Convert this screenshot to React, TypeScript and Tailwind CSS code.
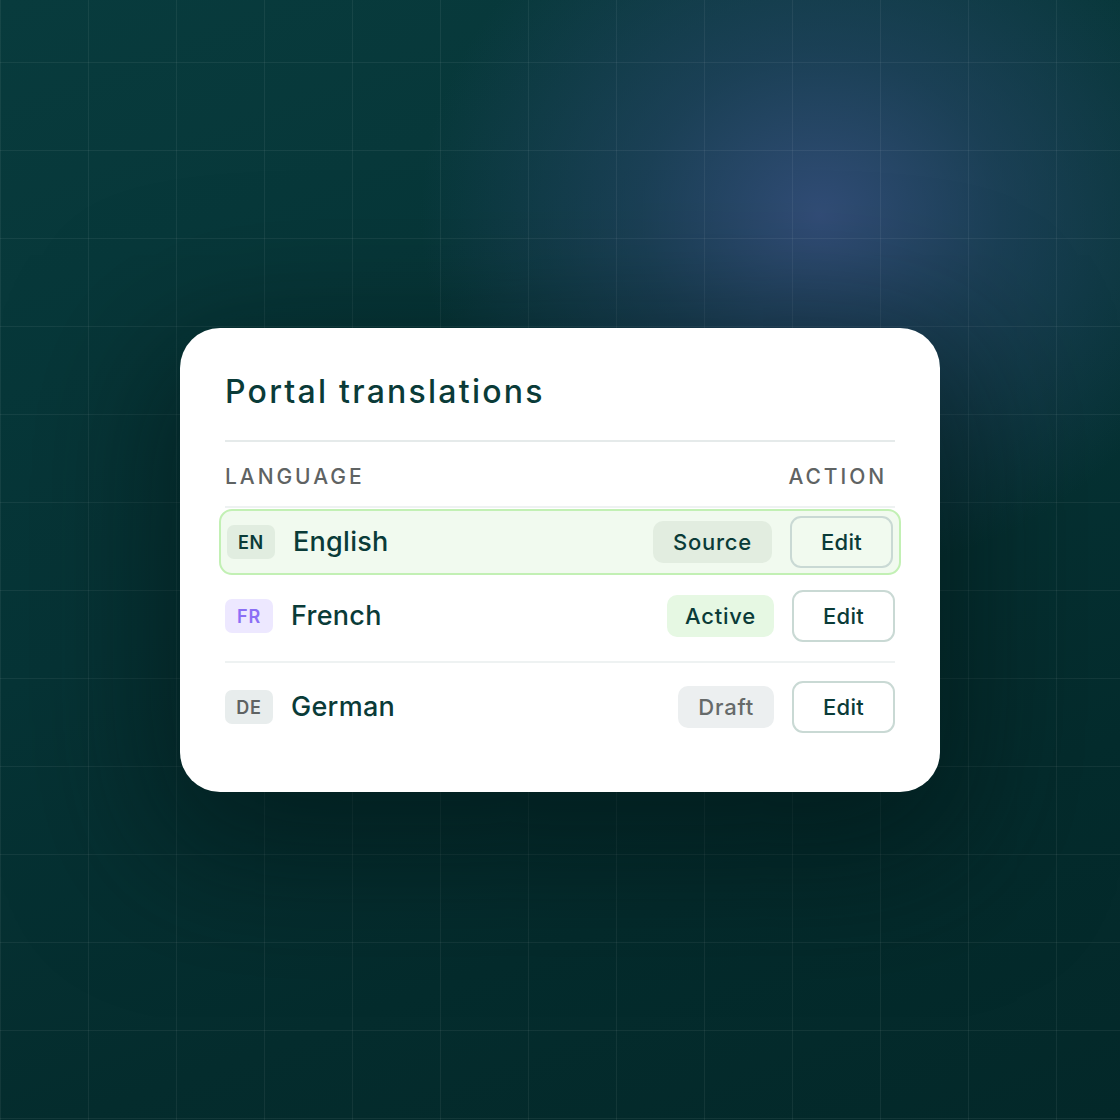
import React from "react";

const font = { fontFamily: "Inter, 'Noto Sans', sans-serif" };

function EditButton({ tinted }: { tinted?: boolean }) {
  return (
    <button
      className={
        "w-[103px] h-[52px] rounded-[11px] border-2 border-[#c9d9d4] text-[22px] font-medium tracking-[0.01em] text-[#0a3b38] flex items-center justify-center " +
        (tinted ? "bg-[#f1faef]" : "bg-white")
      }
    >
      Edit
    </button>
  );
}

export default function App() {
  return (
    <div
      className="w-[1120px] h-[1120px] overflow-hidden bg-[radial-gradient(ellipse_400px_360px_at_820px_215px,rgba(52,78,122,0.95)_0%,rgba(40,70,105,0.6)_45%,rgba(20,60,70,0)_100%),linear-gradient(160deg,#083b3d_0%,#063436_45%,#042c2d_75%,#032829_100%)]"
      style={font}
    >
      <div className="w-full h-full flex items-center justify-center bg-[linear-gradient(to_right,rgba(255,255,255,0.06)_1px,transparent_1px),linear-gradient(to_bottom,rgba(255,255,255,0.06)_1px,transparent_1px)] bg-[size:88px_88px] bg-[position:0px_62px]">
        <div className="w-[760px] h-[464px] bg-white rounded-[40px] shadow-[0_40px_140px_30px_rgba(0,18,18,0.55)] px-[45px] pt-[44px] flex flex-col">
          <h1 className="text-[32px] leading-[40px] font-medium text-[#0a3b38] tracking-[0.07em]">
            Portal translations
          </h1>
          <div className="mt-[28px] h-[2px] bg-[#e5eaea]" />
          <div className="h-[66px] pt-[6px] flex items-center justify-between border-b-[2px] border-[#eef2f2] text-[21px] font-medium tracking-[0.14em] text-[#5f6363]">
            <span>LANGUAGE</span>
            <span className="mr-[8px]">ACTION</span>
          </div>

          <div className="mt-[1px] -mx-[6px] h-[66px] rounded-[13px] border-2 border-[#c2f0b4] bg-[#f1faef] px-[6px] flex items-center">
            <span className="w-[48px] h-[34px] rounded-[7px] bg-[#e1ede0] text-[#0a3b38] text-[18px] font-semibold flex items-center justify-center tracking-[0.04em]">
              EN
            </span>
            <span className="ml-[18px] text-[27px] font-medium tracking-[0.01em] text-[#0a3b38]">English</span>
            <span className="ml-auto h-[42px] px-[20px] rounded-[10px] bg-[#e2ede0] text-[22px] font-medium tracking-[0.035em] text-[#0a3b38] flex items-center">
              Source
            </span>
            <div className="ml-[18px]">
              <EditButton tinted />
            </div>
          </div>

          <div className="pt-[15px] pb-[19px] border-b-[2px] border-[#eef2f2] flex items-center">
            <span className="w-[48px] h-[34px] rounded-[7px] bg-[#ede8ff] text-[#8b6ff5] text-[18px] font-semibold flex items-center justify-center tracking-[0.04em]">
              FR
            </span>
            <span className="ml-[18px] text-[27px] font-medium tracking-[0.01em] text-[#0a3b38]">French</span>
            <span className="ml-auto h-[42px] px-[18px] rounded-[10px] bg-[#e6f8e3] text-[22px] font-medium tracking-[0.035em] text-[#0a3b38] flex items-center">
              Active
            </span>
            <div className="ml-[18px]">
              <EditButton />
            </div>
          </div>

          <div className="pt-[18px] flex items-center">
            <span className="w-[48px] h-[34px] rounded-[7px] bg-[#e8eded] text-[#5f6363] text-[18px] font-semibold flex items-center justify-center tracking-[0.04em]">
              DE
            </span>
            <span className="ml-[18px] text-[27px] font-medium tracking-[0.01em] text-[#0a3b38]">German</span>
            <span className="ml-auto h-[42px] px-[20px] rounded-[10px] bg-[#eceff0] text-[22px] font-medium tracking-[0.035em] text-[#666a6a] flex items-center">
              Draft
            </span>
            <div className="ml-[18px]">
              <EditButton />
            </div>
          </div>
        </div>
      </div>
    </div>
  );
}
